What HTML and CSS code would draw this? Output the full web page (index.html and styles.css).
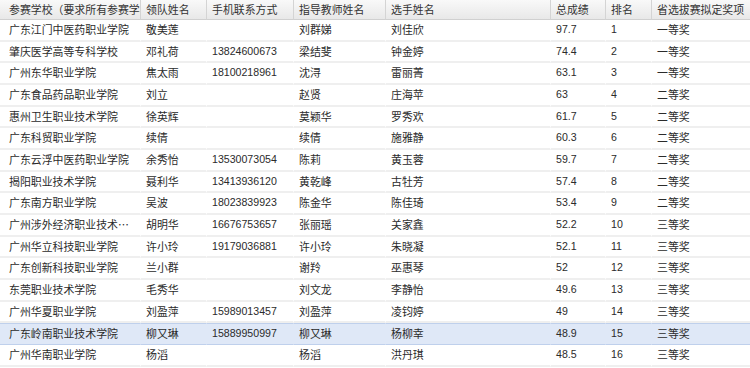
FILE: index.html
```html
<!DOCTYPE html>
<html lang="zh">
<head>
    <meta charset="UTF-8">
    <title>省选拔赛成绩</title>
    <link rel="stylesheet" href="styles.css">
</head>
<body>
    <table class="grid">
        <colgroup>
            <col class="c-school">
            <col class="c-leader">
            <col class="c-phone">
            <col class="c-teacher">
            <col class="c-player">
            <col class="c-score">
            <col class="c-rank">
            <col class="c-award">
        </colgroup>
        <thead>
            <tr>
                <th>参赛学校（要求所有参赛学校名称统一规范）</th>
                <th>领队姓名</th>
                <th>手机联系方式</th>
                <th>指导教师姓名</th>
                <th>选手姓名</th>
                <th>总成绩</th>
                <th>排名</th>
                <th>省选拔赛拟定奖项</th>
            </tr>
        </thead>
        <tbody id="rows"></tbody>
    </table>
    <script>
        // 学校, 领队, 手机, 指导教师, 选手, 总成绩, 排名, 奖项
        const data = [
            ['广东江门中医药职业学院', '敬美莲', '', '刘群娣', '刘佳欣', '97.7', '1', '一等奖'],
            ['肇庆医学高等专科学校', '邓礼荷', '13824600673', '梁结斐', '钟金婷', '74.4', '2', '一等奖'],
            ['广州东华职业学院', '焦太雨', '18100218961', '沈浔', '雷丽菁', '63.1', '3', '一等奖'],
            ['广东食品药品职业学院', '刘立', '', '赵贤', '庄海苹', '63', '4', '二等奖'],
            ['惠州卫生职业技术学院', '徐英辉', '', '莫颖华', '罗秀欢', '61.7', '5', '二等奖'],
            ['广东科贸职业学院', '续倩', '', '续倩', '施雅静', '60.3', '6', '二等奖'],
            ['广东云浮中医药职业学院', '余秀怡', '13530073054', '陈莉', '黄玉蓉', '59.7', '7', '二等奖'],
            ['揭阳职业技术学院', '聂利华', '13413936120', '黄乾峰', '古牡芳', '57.4', '8', '二等奖'],
            ['广东南方职业学院', '吴波', '18023839923', '陈金华', '陈佳琦', '53.4', '9', '二等奖'],
            ['广州涉外经济职业技术学院', '胡明华', '16676753657', '张丽瑶', '关家鑫', '52.2', '10', '三等奖'],
            ['广州华立科技职业学院', '许小玲', '19179036881', '许小玲', '朱晓凝', '52.1', '11', '三等奖'],
            ['广东创新科技职业学院', '兰小群', '', '谢羚', '巫惠琴', '52', '12', '三等奖'],
            ['东莞职业技术学院', '毛秀华', '', '刘文龙', '李静怡', '49.6', '13', '三等奖'],
            ['广州华夏职业学院', '刘盈萍', '15989013457', '刘盈萍', '凌钧婷', '49', '14', '三等奖'],
            ['广东岭南职业技术学院', '柳又琳', '15889950997', '柳又琳', '杨柳幸', '48.9', '15', '三等奖'],
            ['广州华南职业学院', '杨滔', '', '杨滔', '洪丹琪', '48.5', '16', '三等奖']
        ];
        const numCols = [2, 5, 6];
        const tbody = document.getElementById('rows');
        data.forEach((row, i) => {
            const tr = document.createElement('tr');
            if (i === 14) tr.className = 'selected';
            row.forEach((val, j) => {
                const td = document.createElement('td');
                td.textContent = val;
                if (numCols.includes(j)) td.className = 'num';
                tr.appendChild(td);
            });
            tbody.appendChild(tr);
        });
    </script>
</body>
</html>
```

FILE: styles.css
```css
* {
    margin: 0;
    padding: 0;
    box-sizing: border-box;
}

body {
    background: #fff;
    font-family: "Noto Sans CJK SC", "Liberation Sans", sans-serif;
    font-size: 10.9px;
    color: #2b2b2b;
    overflow: hidden;
}

/* Table */
.grid {
    width: 750px;
    table-layout: fixed;
    border-collapse: separate;
    border-spacing: 0;
}

.c-school { width: 140px; }
.c-leader { width: 66px; }
.c-phone { width: 87px; }
.c-teacher { width: 92px; }
.c-player { width: 165px; }
.c-score { width: 55px; }
.c-rank { width: 46px; }
.c-award { width: 99px; }

.grid th {
    height: 20px;
    line-height: 19px;
    padding: 0 5px;
    text-align: left;
    font-weight: normal;
    color: #333;
    white-space: nowrap;
    overflow: hidden;
    text-overflow: clip;
    background: linear-gradient(#f9f9f9, #e8e8e8);
    border-left: 1px solid #d4d4d4;
    border-bottom: 1px solid #d0d0d0;
}

.grid th:first-child {
    border-left: none;
    padding-left: 9px;
    padding-right: 0;
}

.grid td {
    line-height: 19.67px;
    padding: 0 5px;
    white-space: nowrap;
    overflow: hidden;
    text-overflow: ellipsis;
    border-bottom: 2px solid #efefef;
    border-left: 1px solid transparent;
}

.grid td:first-child {
    border-left: none;
    padding-left: 9px;
}

.grid td.num {
    font-family: "Liberation Sans", sans-serif;
    font-size: 10.6px;
}

/* Selected row */
.grid tr.selected td {
    background: #dfe8f7;
    border-top: 1px solid #bfd0ec;
    border-bottom: 1px solid #bfd0ec;
}
```
